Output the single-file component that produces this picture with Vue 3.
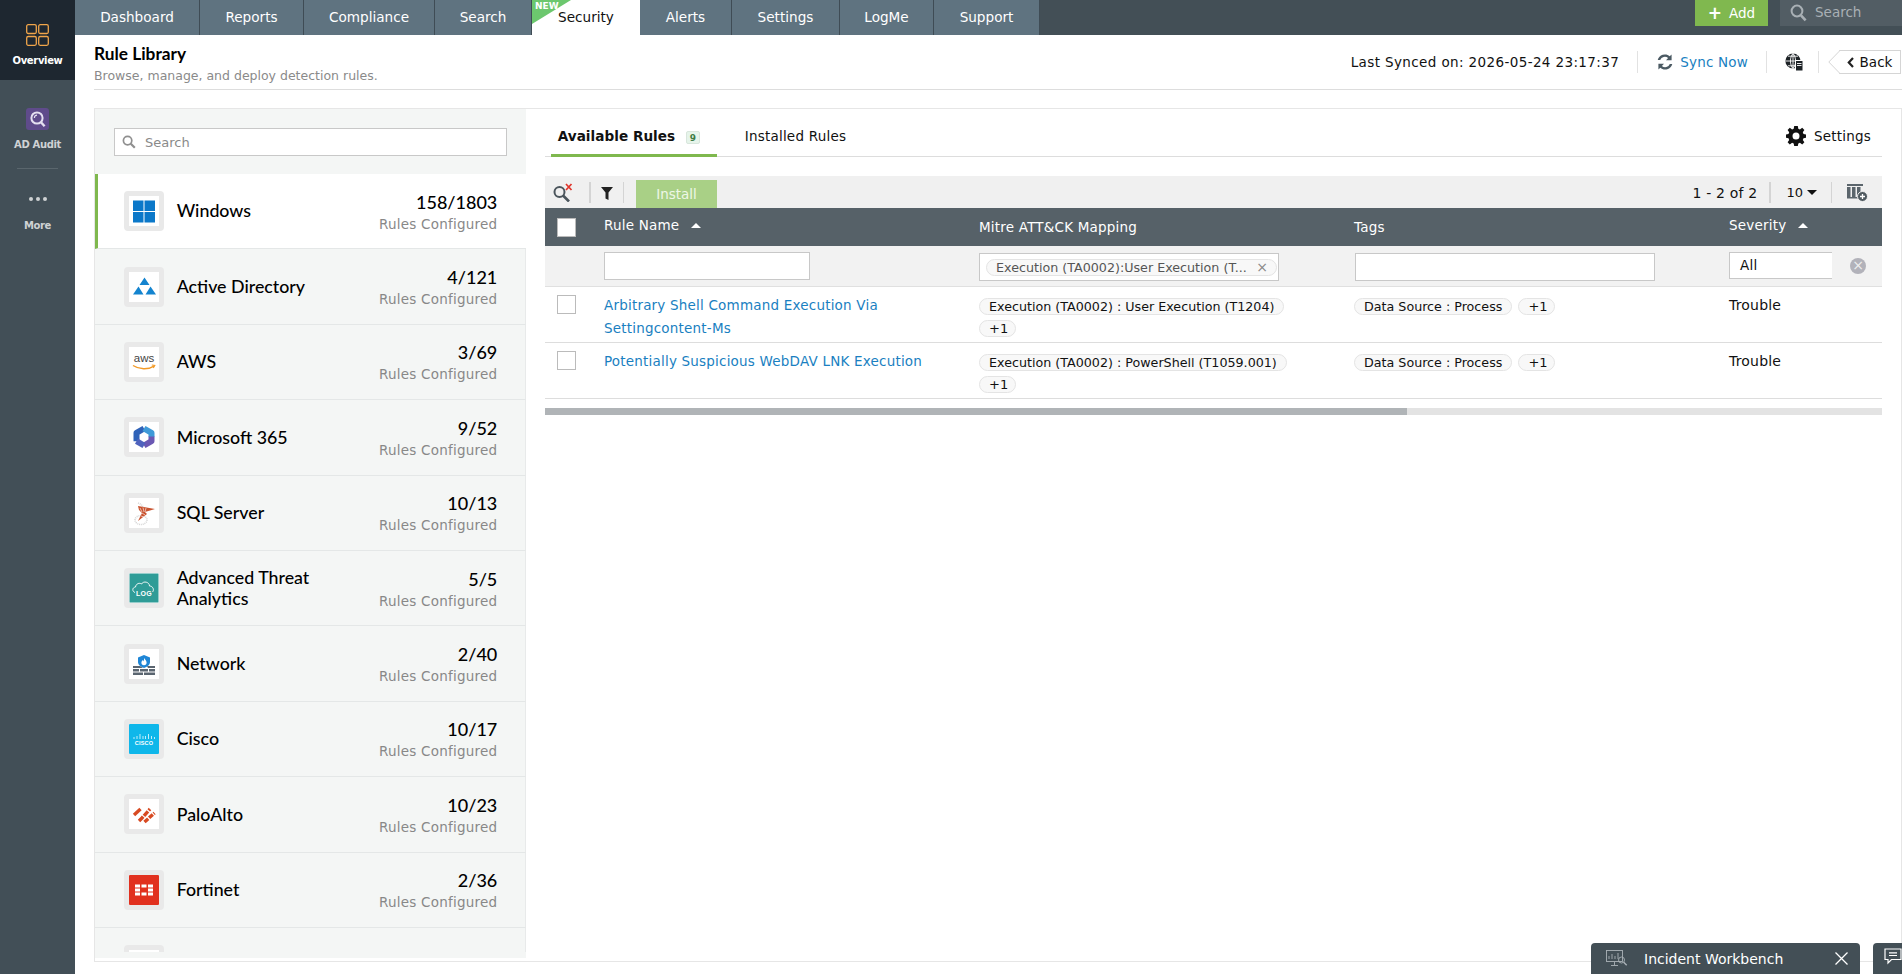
<template>
  <div class="app">
    <aside class="sidebar">
      <div class="side-item side-active">
        <svg class="side-icon" viewBox="0 0 23 22" fill="none" stroke="#f0a54a" stroke-width="1.3">
          <rect x="0.7" y="0.7" width="9.6" height="8.8" rx="1.5" />
          <rect x="12.7" y="0.7" width="9.6" height="8.8" rx="1.5" />
          <rect x="0.7" y="12.5" width="9.6" height="8.8" rx="1.5" />
          <rect x="12.7" y="12.5" width="9.6" height="8.8" rx="1.5" />
        </svg>
        <span>Overview</span>
      </div>
      <div class="side-item side-audit">
        <svg class="side-icon" viewBox="0 0 23 22">
          <rect width="23" height="22" rx="3" fill="#5f4b8b" />
          <circle cx="11" cy="10" r="5.6" fill="none" stroke="#e4dff0" stroke-width="2" />
          <path d="M8.4 10a2.8 2.8 0 0 1 2.6-2.800" fill="none" stroke="#e4dff0" stroke-width="1.200" />
          <path d="M15 14.200l3.600 4" stroke="#e4dff0" stroke-width="2.400" />
        </svg>
        <span>AD Audit</span>
      </div>
      <div class="side-rule"></div>
      <div class="side-item side-more">
        <div class="dots"><i></i><i></i><i></i></div>
        <span>More</span>
      </div>
    </aside>

    <div class="main">
      <nav class="topnav">
        <a v-for="t in tabs" :key="t.name" class="tab" :class="{ active: t.active }" :style="{ width: t.width + 'px' }">
          <span v-if="t.active" class="new-flag"></span>
          <span v-if="t.active" class="new-text">NEW</span>
          {{ t.name }}
        </a>
        <div class="nav-right">
          <button class="add-btn"><span class="plus">+</span>Add</button>
          <div class="nav-search">
            <svg width="17" height="18" viewBox="0 0 17 18" fill="none" stroke="#a9b0b5" stroke-width="2">
              <circle cx="7" cy="7" r="5.400" />
              <path d="M11 11.400l4.600 5" stroke-width="2.600" />
            </svg>
            <span>Search</span>
          </div>
        </div>
      </nav>

      <header class="page-head">
        <div>
          <h1>Rule Library</h1>
          <p>Browse, manage, and deploy detection rules.</p>
        </div>
        <div class="head-right">
          <span class="synced">Last Synced on: 2026-05-24 23:17:37</span>
          <span class="vsep"></span>
          <svg class="sync-icon" width="18" height="18" viewBox="0 0 18 18" fill="#4b5a63">
            <path d="M15.600 1.600v5.600H10l2.100-2.100A4.900 4.900 0 0 0 4.200 7H1.700a7.300 7.300 0 0 1 12-3.700z" />
            <path d="M2.400 16.400v-5.600H8l-2.100 2.100a4.900 4.900 0 0 0 7.900-1.900h2.500a7.300 7.300 0 0 1-12 3.700z" />
          </svg>
          <a class="sync-link">Sync Now</a>
          <span class="vsep sep-b"></span>
          <svg class="globe" width="18" height="18" viewBox="0 0 18 18">
            <circle cx="8" cy="8" r="7.600" fill="#1d2226" />
            <path d="M0.500 8h15M8 0.500v15M3 3.200h10M3 12.800h10M8 0.500C4.600 4 4.600 12 8 15.500M8 0.500c3.400 3.500 3.400 11.500 0 15" fill="none" stroke="#fff" stroke-width="0.900" />
            <rect x="10" y="7" width="8" height="11" fill="#fff" />
            <rect x="11" y="8" width="6.500" height="9.500" fill="#1d2226" />
            <path d="M12 10.500h4.500M12 12.500h4.500" stroke="#fff" stroke-width="0.900" />
          </svg>
          <span class="vsep sep-c"></span>
          <button class="back-btn">
            <svg class="back-tip" width="12" height="24" viewBox="0 0 12 24">
              <path d="M12 0.500L0.800 12 12 23.500" fill="#fff" stroke="#d5d5d5" />
            </svg>
            <svg width="7" height="11" viewBox="0 0 7 11" fill="none" stroke="#222" stroke-width="2.200"><path d="M6 1L1.800 5.500 6 10" /></svg>
            Back
          </button>
        </div>
      </header>

      <section class="panel">
        <div class="left-pane">
          <div class="list-search">
            <svg width="14" height="14" viewBox="0 0 14 14" fill="none" stroke="#8f8f8f" stroke-width="1.700">
              <circle cx="5.600" cy="5.600" r="4.200" />
              <path d="M8.800 8.800l4 4" stroke-width="2.200" />
            </svg>
            <span>Search</span>
          </div>
          <div class="sources">
            <div v-for="s in sources" :key="s.count + s.logo" class="source" :class="{ current: s.current }">
              <div class="logo">
                <svg v-if="s.logo === 'windows'" viewBox="0 0 30 30">
                  <path fill="#0b78c9" d="M4 4.500h10.500V15H4zM15.500 4.500H26V15H15.500zM4 16h10.500v10.500H4zM15.500 16H26v10.500H15.500z" />
                </svg>
                <svg v-else-if="s.logo === 'ad'" viewBox="0 0 30 30">
                  <path fill="#1484cf" d="M15.500 5.500l5 7.500h-10zM9.500 14.500l5 8H4zM21.500 14.500l5.500 8H16.500z" />
                </svg>
                <svg v-else-if="s.logo === 'aws'" viewBox="0 0 30 30">
                  <text x="15" y="15" text-anchor="middle" class="aws-text">aws</text>
                  <path d="M4 18.500c6 4 15 4.500 21 .6" fill="none" stroke="#f29a27" stroke-width="1.400" />
                  <path d="M22.800 18l3 .5-1.500 2.500" fill="none" stroke="#f29a27" stroke-width="1.100" />
                </svg>
                <svg v-else-if="s.logo === 'm365'" viewBox="0 0 30 30" fill="none" stroke-width="6" stroke-linejoin="round">
                  <path d="M7.500 19.200V10.800L15 6.500" stroke="#2f62b8" />
                  <path d="M15 6.500l7.500 4.300V15" stroke="#3f9ad8" />
                  <path d="M22.500 14.500v4.700L15 23.500" stroke="#6b58b3" />
                  <path d="M15 23.500l-7.500-4.300" stroke="#4f62bd" />
                </svg>
                <svg v-else-if="s.logo === 'sql'" viewBox="0 0 30 30" fill="none">
                  <path d="M9 5c3 1 5 3 6 6" stroke="#d8d8d8" stroke-width="1.600" stroke-dasharray="1 .8" />
                  <ellipse cx="12" cy="22" rx="6" ry="4.500" stroke="#d8d8d8" stroke-width="1.600" stroke-dasharray="1 .8" />
                  <path fill="#c9532f" d="M9 8l17 3-10 3 2 2-9 7 4-8-3-3z" />
                  <path d="M11 10l2 4M14 9.500l1 4.500M17 10l-1 4M13 15l3 2M12 18l3 1" stroke="#fff" stroke-width="0.600" />
                </svg>
                <svg v-else-if="s.logo === 'log'" viewBox="0 0 30 30">
                  <rect x="0.500" y="0.500" width="29" height="29" fill="#2f9c97" />
                  <path d="M6 19.500c-3-1-3-5 .5-5.500.5-3.500 4-4.500 6-3 2-3.500 8-2 8 2 3.500 0 5 4 3 6" fill="none" stroke="#fff" stroke-width="0.900" />
                  <text x="15" y="23" text-anchor="middle" class="log-text">LOG</text>
                </svg>
                <svg v-else-if="s.logo === 'network'" viewBox="0 0 30 30">
                  <path fill="#1f86d6" d="M15 6l6 2.500v4.500c0 3-3 5-6 6-3-1-6-3-6-6V8.500z" />
                  <path fill="#fff" d="M15 9c.8 1.600 2.600 2.500 2.600 4.600a2.600 2.600 0 0 1-5.200 0c0-1.400 1-1.800 1.500-2.600.4.500.6 1 .6 1.400.5-.9.7-2 .5-3.400z" />
                  <path fill="#5a6570" d="M4 17h7l3 2H4zM18 17h8v2h-7zM4 20h6v2.500H4zM11 20h8v2.500h-8zM20 20h6v2.500h-6zM4 23.500h10V26H4zM15 23.500h11V26H15z" />
                </svg>
                <svg v-else-if="s.logo === 'cisco'" viewBox="0 0 30 30">
                  <rect width="30" height="30" rx="1" fill="#0fb7ea" />
                  <path d="M5 13v2M8 12v3M11 10v5M14 12v3M16.500 12v3M19.500 10v5M22.500 12v3M25.500 13v2" stroke="#d6f3fb" stroke-width="0.900" />
                  <text x="15" y="20.500" text-anchor="middle" class="cisco-text">CISCO</text>
                </svg>
                <svg v-else-if="s.logo === 'palo'" viewBox="0 0 30 30" fill="none" stroke="#d84a22" stroke-width="3.400">
                  <path d="M5 16l6.500-6" />
                  <path d="M10 22l3-3 8-9" stroke-dasharray="6 1.200" />
                  <path d="M15.500 23l10-9" stroke-dasharray="5 1.200" />
                </svg>
                <svg v-else-if="s.logo === 'forti'" viewBox="0 0 30 30">
                  <rect width="30" height="30" rx="1" fill="#e1301e" />
                  <path fill="#fff" d="M6 9.500h5v3H6zM12.500 9.500h5v3h-5zM19 9.500h5v3h-5zM6 13.500h5v3H6zM19 13.500h5v3h-5zM6 17.500h5v3H6zM12.500 17.500h5v3h-5zM19 17.500h5v3h-5z" />
                </svg>
              </div>
              <div class="source-name">{{ s.name }}</div>
              <div class="source-count">
                <strong>{{ s.count }}</strong>
                <span v-if="s.name">Rules Configured</span>
              </div>
            </div>
          </div>
        </div>

        <div class="right-pane">
          <div class="sub-tabs">
            <a class="sub-tab on">Available Rules <span class="count-badge">9</span></a>
            <a class="sub-tab">Installed Rules</a>
            <a class="sub-settings">
              <svg width="20" height="20" viewBox="0 0 20 20">
                <path fill="#111" fill-rule="evenodd" d="M8.200 0h3.600l.5 2.700 1.600.7L16.200 1.800l2.200 2.200-1.600 2.300.7 1.600 2.500.5v3.400l-2.500.5-.7 1.600 1.600 2.300-2.200 2.200-2.300-1.600-1.600.7-.5 2.500H8.200l-.5-2.500-1.600-.7-2.300 1.600-2.200-2.200 1.600-2.300-.7-1.600L0 11.800V8.400l2.500-.5.700-1.600L1.600 4l2.200-2.200 2.300 1.600 1.600-.7zM10 6.500a3.500 3.500 0 1 0 0 7 3.500 3.500 0 0 0 0-7z" />
              </svg>
              Settings
            </a>
          </div>

          <div class="toolbar">
            <svg class="tool-search" width="20" height="19" viewBox="0 0 20 19" fill="none">
              <circle cx="6.500" cy="9" r="5" stroke="#4b555c" stroke-width="2" />
              <path d="M10 12.500l6 6" stroke="#4b555c" stroke-width="2.600" />
              <path d="M13 1l5.500 6M18.500 1L13 7" stroke="#e0352b" stroke-width="1.700" />
            </svg>
            <span class="tool-sep"></span>
            <svg class="tool-filter" width="12" height="13" viewBox="0 0 12 13"><path fill="#222" d="M0 0h12L7.500 5.500V13l-3-1.500V5.500z" /></svg>
            <span class="tool-sep thin after-filter"></span>
            <button class="install-btn">Install</button>
            <div class="tool-right">
              <span class="pager">1 - 2 of 2</span>
              <span class="tool-sep"></span>
              <span class="per-page">10</span>
              <span class="caret"></span>
              <span class="tool-sep thin"></span>
              <svg class="col-icon" width="21" height="20" viewBox="0 0 21 20">
                <path fill="#5b656c" d="M0 2h16v2H0zM0 5h3.500v11H0zM5 5h3.500v11H5zM10 5h3.500v11H10zM0 15h11v1.500H0z" />
                <circle cx="15.500" cy="14.500" r="5" fill="#4f595f" stroke="#f0f0f0" />
                <path d="M13 14.500h5M15.500 12v5" stroke="#fff" stroke-width="1.300" />
              </svg>
            </div>
          </div>

          <div class="grid">
            <div class="row head">
              <div class="c-check"><span class="box solid"></span></div>
              <div class="c-name up">Rule Name <i class="sort"></i></div>
              <div class="c-mitre">Mitre ATT&amp;CK Mapping</div>
              <div class="c-tags">Tags</div>
              <div class="c-sev up">Severity <i class="sort"></i></div>
            </div>
            <div class="row filters">
              <div class="c-check"></div>
              <div class="c-name"><div class="f-input f-name"></div></div>
              <div class="c-mitre">
                <div class="f-input f-mitre">
                  <span class="f-chip">Execution (TA0002):User Execution (T...<i>×</i></span>
                </div>
              </div>
              <div class="c-tags"><div class="f-input f-tags"></div></div>
              <div class="c-sev">
                <div class="f-select">All</div>
                <span class="f-clear">×</span>
              </div>
            </div>
            <div v-for="r in rules" :key="r.name" class="row item">
              <div class="c-check"><span class="box"></span></div>
              <div class="c-name"><a class="rule-link">{{ r.name }}</a></div>
              <div class="c-mitre chips">
                <span class="chip">{{ r.mitre }}</span>
                <span class="chip plus-one">+1</span>
              </div>
              <div class="c-tags chips">
                <span class="chip">Data Source : Process</span>
                <span class="chip plus-one">+1</span>
              </div>
              <div class="c-sev">{{ r.severity }}</div>
            </div>
          </div>

          <div class="hscroll"><div class="thumb"></div></div>
        </div>
      </section>
    </div>

    <div class="dock">
      <div class="dock-main">
        <svg width="22" height="17" viewBox="0 0 22 17" fill="none" stroke="#aab2b7" stroke-width="0.900">
          <rect x="0.500" y="0.500" width="16" height="11" />
          <path d="M3 9V6M6 9V4M9 9V6M12 9V3M8.500 12v3M5 15.500h7" />
          <circle cx="15.500" cy="10" r="3" />
          <path d="M17.700 12.200l3 3" stroke-width="1.400" />
        </svg>
        <span>Incident Workbench</span>
        <svg class="dock-x" width="13" height="13" viewBox="0 0 13 13" stroke="#fff" stroke-width="1.300"><path d="M0.500 0.500l12 12M12.500 0.500l-12 12" /></svg>
      </div>
      <div class="dock-chat">
        <svg width="18" height="17" viewBox="0 0 18 17" fill="none" stroke="#fff" stroke-width="1.200">
          <path d="M1 1h16v10.500H7.500L4 15v-3.500H1z" />
          <path d="M5 4.800h8M5 7.500h8" />
        </svg>
      </div>
    </div>
  </div>
</template>

<script setup>
const tabs = [
  { name: 'Dashboard', width: 125 },
  { name: 'Reports', width: 104 },
  { name: 'Compliance', width: 131 },
  { name: 'Search', width: 97 },
  { name: 'Security', width: 108, active: true },
  { name: 'Alerts', width: 92 },
  { name: 'Settings', width: 108 },
  { name: 'LogMe', width: 94 },
  { name: 'Support', width: 106 }
]

// the last row is cut off by the list's edge, only the top of its count shows
const sources = [
  { name: 'Windows', count: '158/1803', logo: 'windows', current: true },
  { name: 'Active Directory', count: '4/121', logo: 'ad' },
  { name: 'AWS', count: '3/69', logo: 'aws' },
  { name: 'Microsoft 365', count: '9/52', logo: 'm365' },
  { name: 'SQL Server', count: '10/13', logo: 'sql' },
  { name: 'Advanced Threat Analytics', count: '5/5', logo: 'log' },
  { name: 'Network', count: '2/40', logo: 'network' },
  { name: 'Cisco', count: '10/17', logo: 'cisco' },
  { name: 'PaloAlto', count: '10/23', logo: 'palo' },
  { name: 'Fortinet', count: '2/36', logo: 'forti' },
  { name: '', count: '10/10', logo: 'blank' }
]

const rules = [
  {
    name: 'Arbitrary Shell Command Execution Via Settingcontent-Ms',
    mitre: 'Execution (TA0002) : User Execution (T1204)',
    severity: 'Trouble'
  },
  {
    name: 'Potentially Suspicious WebDAV LNK Execution',
    mitre: 'Execution (TA0002) : PowerShell (T1059.001)',
    severity: 'Trouble'
  }
]
</script>

<style>
html,
body {
  margin: 0;
  background: #fff;
  overflow: hidden;
}
</style>

<style scoped>
.app {
  display: flex;
  height: 974px;
  position: relative;
  overflow: hidden;
  font-family: "DejaVu Sans", Verdana, sans-serif;
  font-size: 13.5px;
  letter-spacing: 0.2px;
  color: #111;
}

.sidebar {
  width: 75px;
  flex: none;
  background: #424f57;
  display: flex;
  flex-direction: column;
  align-items: center;
  font-size: 10px;
  font-weight: 600;
  letter-spacing: -0.35px;
}

.side-item {
  display: flex;
  flex-direction: column;
  align-items: center;
  width: 100%;
  color: #cfd2d4;
}

.side-active {
  height: 80px;
  background: #1e2730;
  color: #fff;
  padding-top: 24px;
  box-sizing: border-box;
}

.side-icon {
  width: 23px;
  height: 22px;
  margin-bottom: 9px;
}

.side-audit {
  padding-top: 28px;
}

.side-rule {
  width: 41px;
  height: 1px;
  background: #5a666d;
  margin: 18px 0 0;
}

.side-more {
  padding-top: 28px;
}

.dots {
  display: flex;
  gap: 3px;
  height: 4px;
  margin-bottom: 19px;
}

.dots i {
  width: 4px;
  height: 4px;
  border-radius: 50%;
  background: #cfd2d4;
}

.main {
  flex: 1;
  min-width: 0;
  display: flex;
  flex-direction: column;
}

.topnav {
  height: 35px;
  flex: none;
  display: flex;
  background: #434f56;
  letter-spacing: 0;
}

.tab {
  position: relative;
  box-sizing: border-box;
  height: 35px;
  line-height: 35px;
  text-align: center;
  color: #fff;
  background: #5f7380;
  border-right: 1px solid #3f4c55;
  font-size: 13.6px;
}

.tab.active {
  background: #fff;
  color: #111;
  border-right: 0;
}

.new-flag {
  position: absolute;
  left: 0;
  top: 0;
  width: 0;
  height: 0;
  border-top: 24px solid #6cc76e;
  border-right: 39px solid transparent;
}

.new-text {
  position: absolute;
  left: 3px;
  top: 1px;
  font-size: 9px;
  line-height: 11px;
  font-weight: 700;
  color: #fff;
}

.nav-right {
  margin-left: auto;
  display: flex;
  align-items: flex-start;
  gap: 12px;
}

.add-btn {
  width: 73px;
  height: 26px;
  border: 0;
  background: #80b84f;
  color: #fff;
  font: inherit;
  font-size: 13.5px;
  padding: 0;
}

.plus {
  font-weight: 700;
  font-size: 17px;
  margin-right: 7px;
  vertical-align: -1px;
}

.nav-search {
  width: 122px;
  height: 26px;
  background: #525d64;
  color: #a9b0b5;
  display: flex;
  align-items: center;
  gap: 8px;
  padding-left: 10px;
  box-sizing: border-box;
}

.nav-search span {
  margin-top: -2px;
}

.page-head {
  height: 55px;
  flex: none;
  margin: 0 0 0 19px;
  border-bottom: 1px solid #ddd;
  display: flex;
  justify-content: space-between;
  box-sizing: border-box;
}

.page-head h1 {
  margin: 9px 0 0;
  font-family: Lato, sans-serif;
  font-size: 17.3px;
  line-height: 20px;
  font-weight: 700;
  letter-spacing: 0;
  color: #000;
}

.page-head p {
  margin: 4px 0 0;
  font-size: 12.5px;
  line-height: 15px;
  letter-spacing: 0;
  color: #8a8a8a;
}

.head-right {
  display: flex;
  align-items: center;
  height: 24px;
  margin-top: 15px;
}

.synced {
  letter-spacing: 0.38px;
}

.vsep {
  width: 1px;
  height: 22px;
  background: #e2e2e2;
  margin: 0 18px;
}

.sync-icon {
  margin-right: 6px;
}

.sync-link {
  color: #1a7fc1;
}

.sep-b {
  margin-right: 18px;
}

.sep-c {
  margin: 0 11px 0 15px;
}

.back-btn {
  position: relative;
  width: 62px;
  height: 24px;
  margin-right: 1px;
  border: 1px solid #d5d5d5;
  border-left: 0;
  background: #fff;
  font: inherit;
  color: #111;
  padding: 0;
  display: flex;
  align-items: center;
  justify-content: center;
  gap: 6px;
  margin-left: 9px;
}

.back-tip {
  position: absolute;
  left: -11px;
  top: -1px;
}

.panel {
  height: 854px;
  flex: none;
  margin: 18px 0 0 19px;
  width: 1808px;
  border: 1px solid #e6e6e6;
  box-sizing: border-box;
  display: flex;
  background: #fff;
}

.left-pane {
  width: 431px;
  flex: none;
  height: 849px;
  background: #f4f6f5;
  display: flex;
  flex-direction: column;
}

.list-search {
  flex: none;
  margin: 19px 19px 18px 19px;
  height: 28px;
  box-sizing: border-box;
  border: 1px solid #c8c8c8;
  background: #fff;
  display: flex;
  align-items: center;
  gap: 9px;
  padding-left: 7px;
  color: #8a8a8a;
  font-size: 13px;
  letter-spacing: 0;
}

.sources {
  height: 778px;
  overflow: hidden;
}

.source {
  height: 75.4px;
  box-sizing: border-box;
  border-bottom: 1px solid #e4e7e7;
  border-right: 1px solid #e8eaea;
  display: flex;
  align-items: center;
  padding: 0 27.7px 0 29px;
}

.source.current {
  background: #fff;
  border-left: 3px solid #7fb84e;
  border-right: 0;
  padding-left: 26px;
  padding-right: 28.7px;
}

.logo {
  width: 40px;
  height: 40px;
  flex: none;
  box-sizing: border-box;
  border: 5px solid #e9e9e9;
  border-radius: 4px;
  background: #fff;
}

.logo svg {
  display: block;
  width: 30px;
  height: 30px;
}

.aws-text {
  font-family: "Liberation Sans", sans-serif;
  font-size: 11.5px;
  fill: #444;
  letter-spacing: 0;
}

.log-text {
  font-family: "Liberation Sans", sans-serif;
  font-size: 7px;
  font-weight: 700;
  fill: #fff;
}

.cisco-text {
  font-family: "Liberation Sans", sans-serif;
  font-size: 5.5px;
  font-weight: 700;
  fill: #fff;
}

.source-name {
  margin-left: 12.7px;
  width: 150px;
  font-family: Lato, sans-serif;
  font-size: 17.8px;
  font-weight: 500;
  line-height: 21.5px;
  letter-spacing: 0;
  color: #000;
}

.source-count {
  margin-left: auto;
  text-align: right;
  display: flex;
  flex-direction: column;
  gap: 3px;
}

.source-count strong {
  font-family: Lato, sans-serif;
  font-size: 18px;
  font-weight: 500;
  line-height: 22px;
  letter-spacing: 0;
  color: #000;
}

.source-count span {
  font-size: 13.5px;
  line-height: 16px;
  letter-spacing: 0.22px;
  color: #888;
}

.right-pane {
  flex: 1;
  min-width: 0;
  padding: 0 19px;
}

.sub-tabs {
  height: 48px;
  border-bottom: 1px solid #ddd;
  display: flex;
  align-items: flex-end;
  box-sizing: border-box;
  position: relative;
}

.sub-tab {
  height: 29px;
  line-height: 16px;
  padding: 0 6.7px;
  color: #111;
  margin-left: 6px;
  margin-bottom: -1px;
  letter-spacing: 0.22px;
}

.sub-tab.on {
  font-weight: 700;
  width: 166px;
  flex: none;
  font-size: 13.6px;
  letter-spacing: 0.03px;
  border-bottom: 3px solid #7fb84e;
  box-sizing: border-box;
  white-space: nowrap;
}

.sub-tab:nth-child(2) {
  margin-left: 21px;
}

.count-badge {
  display: inline-block;
  box-sizing: border-box;
  width: 14px;
  height: 13px;
  margin-left: 6px;
  line-height: 12px;
  text-align: center;
  font-size: 9px;
  color: #3e7c45;
  background: #e6f4ea;
  border: 1px solid #d8e6dc;
  border-radius: 2px;
}

.sub-settings {
  margin-left: auto;
  margin-right: 11px;
  margin-bottom: 10px;
  display: flex;
  align-items: center;
  gap: 8px;
  height: 20px;
}

.toolbar {
  margin-top: 19px;
  height: 32px;
  background: #f0f0f0;
  display: flex;
  align-items: center;
}

.tool-search {
  margin-left: 8px;
}

.tool-sep {
  width: 2px;
  height: 21px;
  background: #d4d4d4;
  margin: 0 15px 0 16px;
}

.tool-sep.thin {
  width: 1px;
  margin: 0 12px;
}

.tool-sep.after-filter {
  margin: 0 12px 0 10px;
}

.tool-filter {
  margin: 2px 0 0 -5px;
}

.install-btn {
  width: 81px;
  height: 28px;
  margin: 3px 0 0 0;
  border: 0;
  background: #a9d086;
  color: #eef7e6;
  font: inherit;
  letter-spacing: 0;
  padding: 0;
}

.tool-right {
  margin-left: auto;
  display: flex;
  align-items: center;
}

.pager {
  margin: 2px -4px 0 0;
  font-size: 14px;
}

.per-page {
  font-size: 13px;
  letter-spacing: 0;
}

.caret {
  width: 0;
  height: 0;
  margin-left: 4px;
  margin-right: 2px;
  border: 5px solid transparent;
  border-top: 5px solid #111;
  border-bottom: 0;
}

.col-icon {
  margin: 0 14px 0 3px;
}

.row {
  display: grid;
  grid-template-columns: 59px 375px 375px 375px 1fr;
  box-sizing: border-box;
}

.row.head {
  height: 38px;
  background: #566168;
  color: #fff;
  align-items: center;
}

.head .c-check {
  padding: 0 0 0 12px;
}

.head .up {
  margin-top: -4px;
}

.box {
  display: block;
  width: 19px;
  height: 19px;
  box-sizing: border-box;
  border: 1px solid #bbb;
  background: #fff;
  margin-left: 12px;
}

.head .box {
  margin: 0;
}

.sort {
  display: inline-block;
  width: 0;
  height: 0;
  margin: 0 0 2px 7px;
  border: 5px solid transparent;
  border-bottom: 5px solid #fff;
  border-top: 0;
}

.row.filters {
  height: 41px;
  background: #f2f2f2;
  border-bottom: 1px solid #e0e0e0;
  align-items: center;
}

.f-input {
  box-sizing: border-box;
  height: 28px;
  border: 1px solid #c8c8c8;
  background: #fff;
}

.f-name {
  width: 206px;
}

.f-mitre {
  width: 300px;
  margin-top: 2px;
  padding: 5px 1px 0 6px;
  color: #555;
  font-size: 12.7px;
  letter-spacing: 0;
}

.f-tags {
  width: 300px;
  margin: 2px 0 0 1px;
}

.f-chip {
  display: flex;
  justify-content: space-between;
  box-sizing: border-box;
  height: 17px;
  line-height: 15px;
  padding: 0 8px 0 9px;
  border: 1px solid #e4e4e4;
  border-radius: 9px;
  background: #f8f8f8;
  white-space: nowrap;
}

.f-chip i {
  font-style: normal;
  color: #888;
  font-size: 14px;
}

.filters .c-sev {
  display: flex;
  align-items: center;
  margin-top: -1px;
}

.f-select {
  box-sizing: border-box;
  width: 103px;
  height: 27px;
  line-height: 25px;
  padding-left: 10px;
  border: 1px solid #c8c8c8;
  border-right: 0;
  background: #fff;
  color: #111;
}

.f-clear {
  width: 16px;
  height: 16px;
  border-radius: 50%;
  background: #b2b2ba;
  color: #eee;
  font-size: 14px;
  line-height: 15px;
  text-align: center;
  margin: 1px 0 0 18px;
  letter-spacing: 0;
}

.row.item {
  height: 56px;
  border-bottom: 1px solid #ddd;
  padding-top: 8px;
}

.rule-link {
  display: block;
  width: 350px;
  color: #1a7fc1;
  line-height: 23px;
  margin-top: -1px;
}

.chips {
  display: flex;
  flex-wrap: wrap;
  align-content: flex-start;
  gap: 5px 6px;
  margin-top: 3px;
}

.chip {
  box-sizing: border-box;
  height: 17px;
  line-height: 15px;
  padding: 0 9px;
  font-size: 12.7px;
  letter-spacing: 0;
  color: #111;
  background: #f8f8f8;
  border: 1px solid #e4e4e4;
  border-radius: 9px;
  white-space: nowrap;
}

.plus-one {
  width: 37px;
  padding: 0 0 0 9px;
  font-size: 13px;
}

.c-mitre.chips {
  flex-direction: column;
  align-items: flex-start;
  flex-wrap: nowrap;
}

.item .c-sev {
  line-height: 20px;
  font-size: 14px;
}

.hscroll {
  height: 7px;
  margin-top: 9px;
  background: #e3e3e3;
}

.thumb {
  width: 862px;
  height: 7px;
  background: #b0b4b7;
}

.dock {
  position: absolute;
  left: 1591px;
  top: 943px;
  display: flex;
  gap: 13px;
  letter-spacing: 0;
}

.dock-main {
  width: 269px;
  height: 31px;
  box-sizing: border-box;
  background: #434f56;
  border-radius: 4px 4px 0 0;
  color: #fff;
  display: flex;
  align-items: center;
  padding: 0 12px 0 15px;
  font-size: 14px;
}

.dock-main span {
  margin-left: 16px;
}

.dock-x {
  margin-left: auto;
}

.dock-chat {
  width: 29px;
  height: 31px;
  background: #434f56;
  border-radius: 4px 0 0 0;
  padding: 5px 0 0 11px;
  box-sizing: border-box;
}
</style>
